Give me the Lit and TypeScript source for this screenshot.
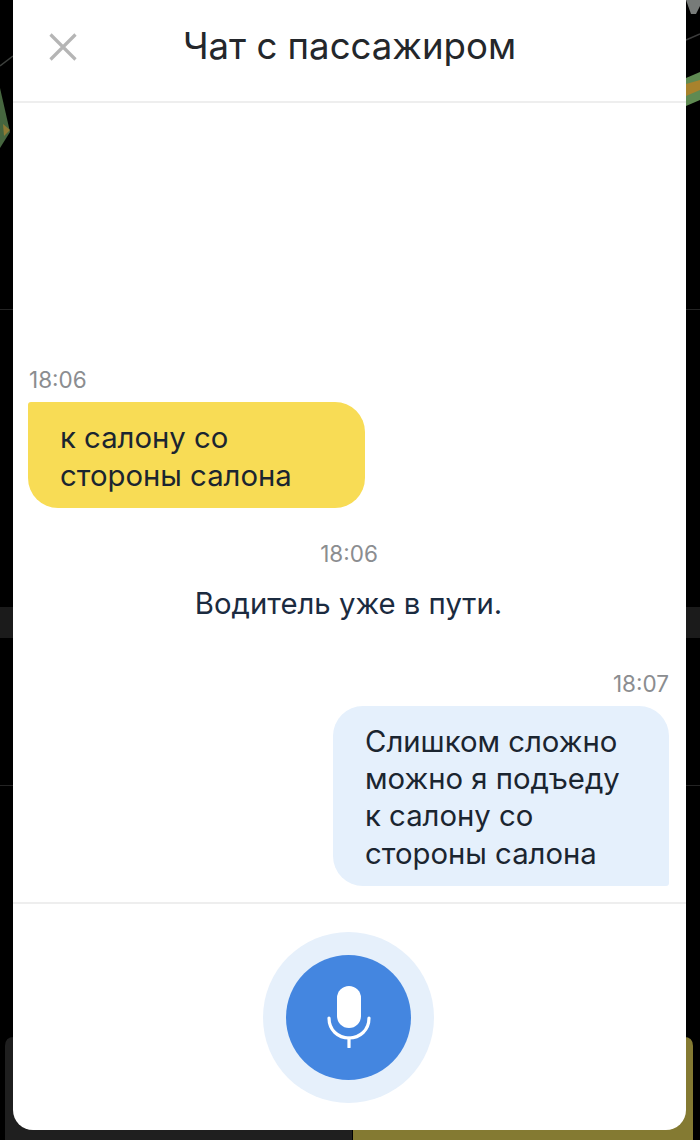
import { LitElement, html, css, svg } from "lit";
import { customElement } from "lit/decorators.js";

@customElement("app-root")
export class AppRoot extends LitElement {
  static styles = css`
    :host {
      display: block;
      position: relative;
      width: 700px;
      height: 1140px;
      overflow: hidden;
      background: #000;
      font-family: "Inter", "Noto Sans", sans-serif;
      color: #1f2a37;
    }
    .backdrop {
      position: absolute;
      inset: 0;
      width: 700px;
      height: 1140px;
    }
    .panel {
      position: relative;
      box-sizing: border-box;
      width: 673px;
      height: 1130px;
      margin-left: 13px;
      background: #fff;
      border-radius: 0 0 20px 20px;
      display: flex;
      flex-direction: column;
    }
    .header {
      flex: none;
      height: 103px;
      box-sizing: border-box;
      display: grid;
      grid-template-columns: 100px 1fr 100px;
      align-items: center;
      border-bottom: 2px solid #eeeeee;
    }
    .close {
      width: 30px;
      height: 30px;
      margin-left: 35px;
      margin-top: -8px;
      display: block;
    }
    .title {
      text-align: center;
      font-size: 36.6px;
      line-height: 40px;
      margin-top: -10px;
      color: #24272b;
      white-space: nowrap;
    }
    .messages {
      flex: 1;
      min-height: 0;
      display: flex;
      flex-direction: column;
      justify-content: flex-end;
      padding: 0 17px 16px 15px;
    }
    .time {
      font-size: 22.5px;
      line-height: 28px;
      color: #8b8d90;
      margin-bottom: 8px;
      padding-left: 1px;
    }
    .time.center { text-align: center; margin: 32px 0 0; }
    .time.right { text-align: right; margin-top: 0; }
    .bubble {
      box-sizing: border-box;
      font-size: 29.3px;
      color: #1b2530;
    }
    .in {
      width: 337px;
      height: 106px;
      padding: 17px 20px 0 32px;
      line-height: 38px;
      background: #f8dc55;
      border-radius: 3px 30px 30px 30px;
    }
    .out {
      align-self: flex-end;
      width: 336px;
      height: 180px;
      padding: 17px 20px 0 32px;
      line-height: 37.2px;
      background: #e5f0fc;
      border-radius: 30px 30px 3px 30px;
    }
    .system {
      text-align: center;
      font-size: 29.3px;
      line-height: 38px;
      margin: 17px 0 47px;
      color: #1b2b40;
    }
    .footer {
      flex: none;
      height: 228px;
      box-sizing: border-box;
      border-top: 2px solid #eeeeee;
      display: flex;
      align-items: center;
      justify-content: center;
      padding-right: 2px;
    }
    .halo {
      width: 171px;
      height: 171px;
      border-radius: 50%;
      background: #e6f0fb;
      display: flex;
      align-items: center;
      justify-content: center;
    }
    .mic {
      width: 125px;
      height: 125px;
      border-radius: 50%;
      background: #4486e0;
      display: flex;
      align-items: center;
      justify-content: center;
    }
    .mic svg { display: block; width: 46px; height: 62px; }
  `;

  private backdrop() {
    return svg`
      <rect x="0" y="607" width="700" height="31" fill="#1b1b1b"/>
      <rect x="0" y="309" width="700" height="1" fill="#242424"/>
      <rect x="0" y="785" width="700" height="1" fill="#242424"/>
      <path d="M0 66 L13 56" stroke="#3d403d" stroke-width="1.5" fill="none"/>
      <path d="M0 88 L10 132 L0 148 Z" fill="#46663f"/>
      <path d="M3 124 L10 130 L4 136 Z" fill="#8f7a34"/>
      <path d="M686 40 L700 34" stroke="#3c3c3c" stroke-width="1.5"/>
      <path d="M686 78 L700 72 L700 100 L686 106 Z" fill="#5f8a52"/>
      <path d="M686 84 L700 80 L700 90 L686 96 Z" fill="#a8822c"/>
      <path d="M686 0 L700 0 L700 6 L696 14 L691 14 Z" fill="#777b79"/>
      <path d="M5 1140 L5 1046 Q5 1037 14 1037 L352 1037 L352 1140 Z" fill="#1f1f1f"/>
      <path d="M353 1140 L353 1037 L684 1037 Q693 1037 693 1046 L693 1140 Z" fill="#847a32"/>
    `;
  }

  render() {
    return html`
      <svg class="backdrop" viewBox="0 0 700 1140">${this.backdrop()}</svg>
      <section class="panel">
        <header class="header">
          <svg class="close" viewBox="0 0 30 30" fill="none" stroke="#b5b5b5" stroke-width="3.2">
            <path d="M2.5 2.5 L27.5 27.5 M27.5 2.5 L2.5 27.5" />
          </svg>
          <div class="title">Чат с пассажиром</div>
          <div></div>
        </header>
        <div class="messages">
          <div class="time">18:06</div>
          <div class="bubble in">к салону со<br />стороны салона</div>
          <div class="time center">18:06</div>
          <div class="system">Водитель уже в пути.</div>
          <div class="time right">18:07</div>
          <div class="bubble out">Слишком сложно<br />можно я подъеду<br />к салону со<br />стороны салона</div>
        </div>
        <footer class="footer">
          <div class="halo">
            <div class="mic">
              <svg viewBox="0 0 46 62" fill="none">
                <rect x="11" y="0" width="24" height="42" rx="12" fill="#fff" />
                <path d="M3 32 C3 44 12 52 23 52 C34 52 43 44 43 32" stroke="#fff" stroke-width="3.2" stroke-linecap="round" />
                <path d="M23 52 L23 61" stroke="#fff" stroke-width="3.2" stroke-linecap="round" />
              </svg>
            </div>
          </div>
        </footer>
      </section>
    `;
  }
}
